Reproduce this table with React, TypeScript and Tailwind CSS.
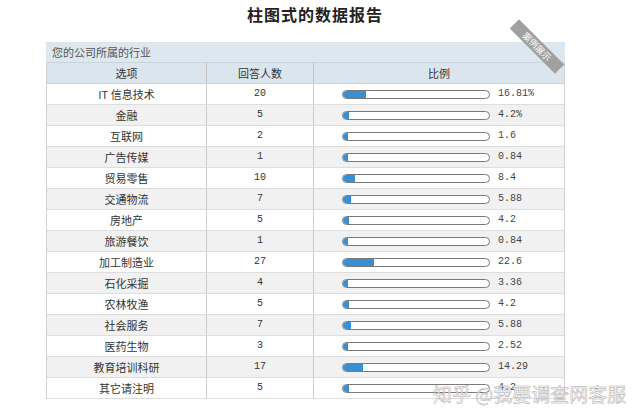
import React from 'react';

const rows = [
  { name: 'IT 信息技术', count: '20', pct: 16.81, label: '16.81%' },
  { name: '金融', count: '5', pct: 4.2, label: '4.2%' },
  { name: '互联网', count: '2', pct: 1.6, label: '1.6' },
  { name: '广告传媒', count: '1', pct: 0.84, label: '0.84' },
  { name: '贸易零售', count: '10', pct: 8.4, label: '8.4' },
  { name: '交通物流', count: '7', pct: 5.88, label: '5.88' },
  { name: '房地产', count: '5', pct: 4.2, label: '4.2' },
  { name: '旅游餐饮', count: '1', pct: 0.84, label: '0.84' },
  { name: '加工制造业', count: '27', pct: 22.6, label: '22.6' },
  { name: '石化采掘', count: '4', pct: 3.36, label: '3.36' },
  { name: '农林牧渔', count: '5', pct: 4.2, label: '4.2' },
  { name: '社会服务', count: '7', pct: 5.88, label: '5.88' },
  { name: '医药生物', count: '3', pct: 2.52, label: '2.52' },
  { name: '教育培训科研', count: '17', pct: 14.29, label: '14.29' },
  { name: '其它请注明', count: '5', pct: 4.2, label: '4.2' },
];

export default function App() {
  return (
    <div className="relative w-[640px] h-[420px] overflow-hidden bg-white text-[#333] font-['Noto_Sans_CJK_SC','Noto_Sans',sans-serif]">
      {/* 标题 */}
      <div className="pt-[4px] pr-[10px] h-[42px] text-center text-[16px] leading-[20px] font-bold text-[#222] tracking-[1px]">
        柱图式的数据报告
      </div>

      <div className="relative ml-[46px] w-[519px]">
        {/* 角标 */}
        <div className="absolute z-10 left-[459px] top-[-2px] w-[64px] h-[13px] rotate-45 bg-[#a0a0a0] text-white text-[9px] leading-[13px] text-center">
          案例展示
        </div>

        <div className="h-[21px] bg-[#dde7ef] border-b border-[#c9d4dc] pl-[6px] text-[11px] leading-[21px] text-[#555]">
          您的公司所属的行业
        </div>

        <div className="border-l border-r border-[#d0d0d0]">
          <div className="flex h-[21px] bg-[#dbe5ee] border-b border-[#c8d2da] text-[11px] leading-[21px]">
            <div className="w-[160px] text-center border-r border-[#c4c4c4]">选项</div>
            <div className="w-[107px] text-center border-r border-[#c4c4c4]">回答人数</div>
            <div className="flex-1 text-center">比例</div>
          </div>

          {rows.map((r, i) => (
            <div
              key={r.name}
              className={`flex h-[21px] border-b border-[#dddddd] text-[11px] leading-[20px] ${i % 2 === 1 ? 'bg-[#f1f1f1]' : 'bg-white'}`}
            >
              <div className="w-[160px] text-center border-r border-[#cccccc]">{r.name}</div>
              <div className="w-[107px] text-center border-r border-[#cccccc] font-['Liberation_Mono',monospace] text-[10px]">{r.count}</div>
              <div className="flex-1 flex items-center pl-[28px]">
                <div className="w-[148px] h-[9px] rounded-full border border-[#7a7a7a] bg-white overflow-hidden">
                  <div
                    className="h-full rounded-l-full bg-[#3a8fd3]"
                    style={{ width: `max(${r.pct * 0.95}%, 5px)` }}
                  />
                </div>
                <span className="ml-[8px] font-['Liberation_Mono',monospace] text-[10px] text-[#444]">{r.label}</span>
              </div>
            </div>
          ))}
        </div>
      </div>

      {/* 水印 */}
      <div className="absolute left-[433px] top-[383px] whitespace-nowrap text-[19px] leading-[22px] text-white/85 [-webkit-text-stroke:0.5px_#a8a8a8]">
        知乎 @我要调查网客服
      </div>
    </div>
  );
}
